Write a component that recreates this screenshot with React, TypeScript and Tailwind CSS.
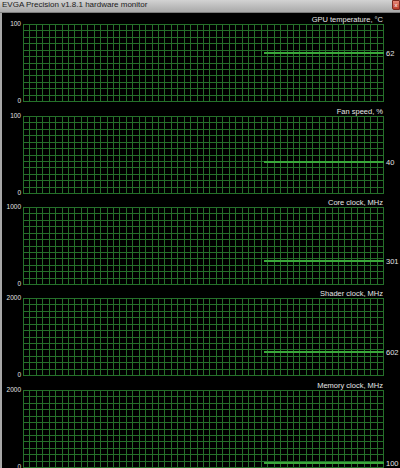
const panels = [
  { title: "GPU temperature, °C", max: "100", value: 62, scale: 100, head: "h-[11px]" },
  { title: "Fan speed, %", max: "100", value: 40, scale: 100, head: "h-[14px]" },
  { title: "Core clock, MHz", max: "1000", value: 301, scale: 1000, head: "h-[13px]" },
  { title: "Shader clock, MHz", max: "2000", value: 602, scale: 2000, head: "h-[13px]" },
  { title: "Memory clock, MHz", max: "2000", value: 100, scale: 2000, head: "h-[14px]" },
];

const W = 360;
const H = 77;
const COLS = 56;
const ROWS = 12;

function Grid({ value, scale }: { value: number; scale: number }) {
  const vx = Array.from({ length: COLS + 1 }, (_, i) => Math.round((i * W) / COLS) + 0.5);
  const hy = Array.from({ length: ROWS + 1 }, (_, i) => Math.round((i * H) / ROWS) + 0.5);
  const y = Math.round(H * (1 - value / scale));

  return (
    <svg width={W + 17} height={H + 1} className="block overflow-visible">
      {vx.map((x) => (
        <line key={"v" + x} x1={x} y1={0} x2={x} y2={H + 1} stroke="#25702a" strokeWidth={1} />
      ))}
      {hy.map((yy) => (
        <line key={"h" + yy} x1={0} y1={yy} x2={W + 1} y2={yy} stroke="#25702a" strokeWidth={1} />
      ))}
      <line x1={241} y1={y} x2={W + 1} y2={y} stroke="#3aa83a" strokeWidth={2} />
      <text
        x={W + 3}
        y={y + 2.5}
        fill="#e2e2e2"
        fontSize={7.5}
        fontFamily="Liberation Sans, Arial, sans-serif"
      >
        {value}
      </text>
    </svg>
  );
}

export default function App() {
  return (
    <div className="w-[400px] h-[468px] bg-black flex flex-col overflow-hidden font-['Liberation_Sans',Arial,sans-serif]">
      {/* title bar */}
      <div className="h-[14px] flex items-start justify-between bg-gradient-to-b from-[#d2d2d2] to-[#a9a9a9] border-b border-[#7c7c7c]">
        <span className="pl-[2px] pt-[1px] text-[8px] leading-none text-[#1c1c1c]">
          EVGA Precision v1.8.1 hardware monitor
        </span>
        <div className="w-[8px] h-[10px] bg-gradient-to-b from-[#e98a7a] to-[#b83a28] border border-[#7a2a20] rounded-bl-[2px] flex items-center justify-center text-[6px] leading-none text-white">
          x
        </div>
      </div>

      <div className="flex-1 flex flex-col border-l-2 border-[#a7a7a7]">
        {panels.map((p) => (
          <div key={p.title} className="flex flex-col">
            <div className={p.head + " flex items-end justify-end pr-[17px]"}>
              <span className="text-[7.5px] leading-none text-[#e6e6e6] pb-[1px]">{p.title}</span>
            </div>
            <div className="flex">
              <div className="w-[21px] h-[78px] flex flex-col justify-between items-end pr-[2px] text-[6.5px] leading-none text-[#e0e0e0]">
                <span className="-mt-[3px]">{p.max}</span>
                <span className="-mb-[2px]">0</span>
              </div>
              <Grid value={p.value} scale={p.scale} />
            </div>
          </div>
        ))}
      </div>
    </div>
  );
}
